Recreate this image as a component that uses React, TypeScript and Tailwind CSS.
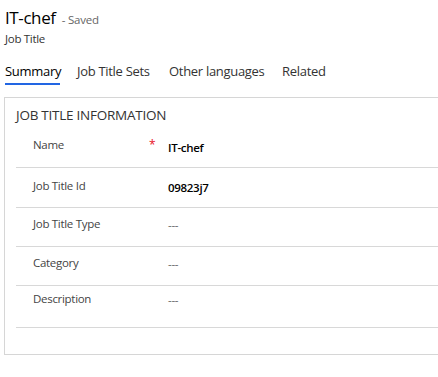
import React from 'react';

type Field = {
  label: string;
  value: string;
  required?: boolean;
  empty?: boolean;
  rowClass: string;
  labelClass: string;
  valueClass: string;
};

const fields: Field[] = [
  { label: 'Name', value: 'IT-chef', required: true, rowClass: 'h-[41px]', labelClass: 'pt-[10px]', valueClass: 'pt-[13px]' },
  { label: 'Job Title Id', value: '09823j7', rowClass: 'h-[40px]', labelClass: 'pt-[10px]', valueClass: 'pt-[12px]' },
  { label: 'Job Title Type', value: '---', empty: true, rowClass: 'h-[39px]', labelClass: 'pt-[8px]', valueClass: 'pt-[9px]' },
  { label: 'Category', value: '---', empty: true, rowClass: 'h-[39px]', labelClass: 'pt-[8px]', valueClass: 'pt-[9px]' },
  { label: 'Description', value: '---', empty: true, rowClass: 'h-[42px]', labelClass: 'pt-[5px]', valueClass: 'pt-[6px]' },
];

const tabs = [
  { name: 'Summary', w: 'w-[72px]' },
  { name: 'Job Title Sets', w: 'w-[92px]' },
  { name: 'Other languages', w: 'w-[113px]' },
  { name: 'Related', w: 'w-[60px]' },
];

export default function App() {
  return (
    <div className="w-[438px] h-[377px] overflow-hidden bg-white text-[#333] font-['Segoe_UI','Open_Sans',sans-serif]">
      {/* Header */}
      <div className="px-[5px] pt-[6px]">
        <div className="flex items-baseline gap-[6px] leading-[24px]">
          <h1 className="text-[17px] font-medium tracking-[-0.4px] text-black">IT-chef</h1>
          <span className="text-[11.5px] tracking-[-0.2px] text-[#666]">- Saved</span>
        </div>
        <p className="text-[11.5px] font-medium tracking-[-0.3px] leading-[14px] text-[#333]">Job Title</p>
      </div>

      {/* Tabs */}
      <div className="flex px-[5px] mt-[16px]">
        {tabs.map((t, i) => (
          <div key={t.name} className={`flex flex-col items-start ${t.w}`}>
            <span
              className={`text-[13px] tracking-[-0.3px] leading-[18px] ${i === 0 ? 'text-black' : 'text-[#333]'}`}
            >
              {t.name}
            </span>
            <div className={`mt-[3px] h-[2px] w-[55px] ${i === 0 ? 'bg-[#2266e3]' : 'bg-transparent'}`} />
          </div>
        ))}
      </div>

      {/* Card */}
      <div className="ml-[4px] mt-[12px] w-[450px] border border-[#d6d6d6] bg-white pb-[26px]">
        <h2 className="pl-[11px] pt-[7px] pb-[2px] text-[13.5px] tracking-[-0.25px] leading-[20px] uppercase text-[#333]">
          Job Title Information
        </h2>
        <div className="ml-[11px]">
          {fields.map(f => (
            <div key={f.label} className={`flex border-b border-[#d8d8d8] ${f.rowClass}`}>
              <div
                className={`w-[133px] pl-[17px] text-[11.5px] tracking-[-0.3px] leading-[16px] text-[#444] ${f.labelClass}`}
              >
                {f.label}
              </div>
              <div className={`w-[19px] text-[12px] leading-[16px] text-[#e81123] ${f.labelClass}`}>
                {f.required ? '*' : ''}
              </div>
              <div
                className={`text-[11.5px] tracking-[-0.3px] leading-[16px] ${f.valueClass} ${
                  f.empty ? 'text-[#666]' : 'font-semibold text-black'
                }`}
              >
                {f.value}
              </div>
            </div>
          ))}
        </div>
      </div>
    </div>
  );
}
